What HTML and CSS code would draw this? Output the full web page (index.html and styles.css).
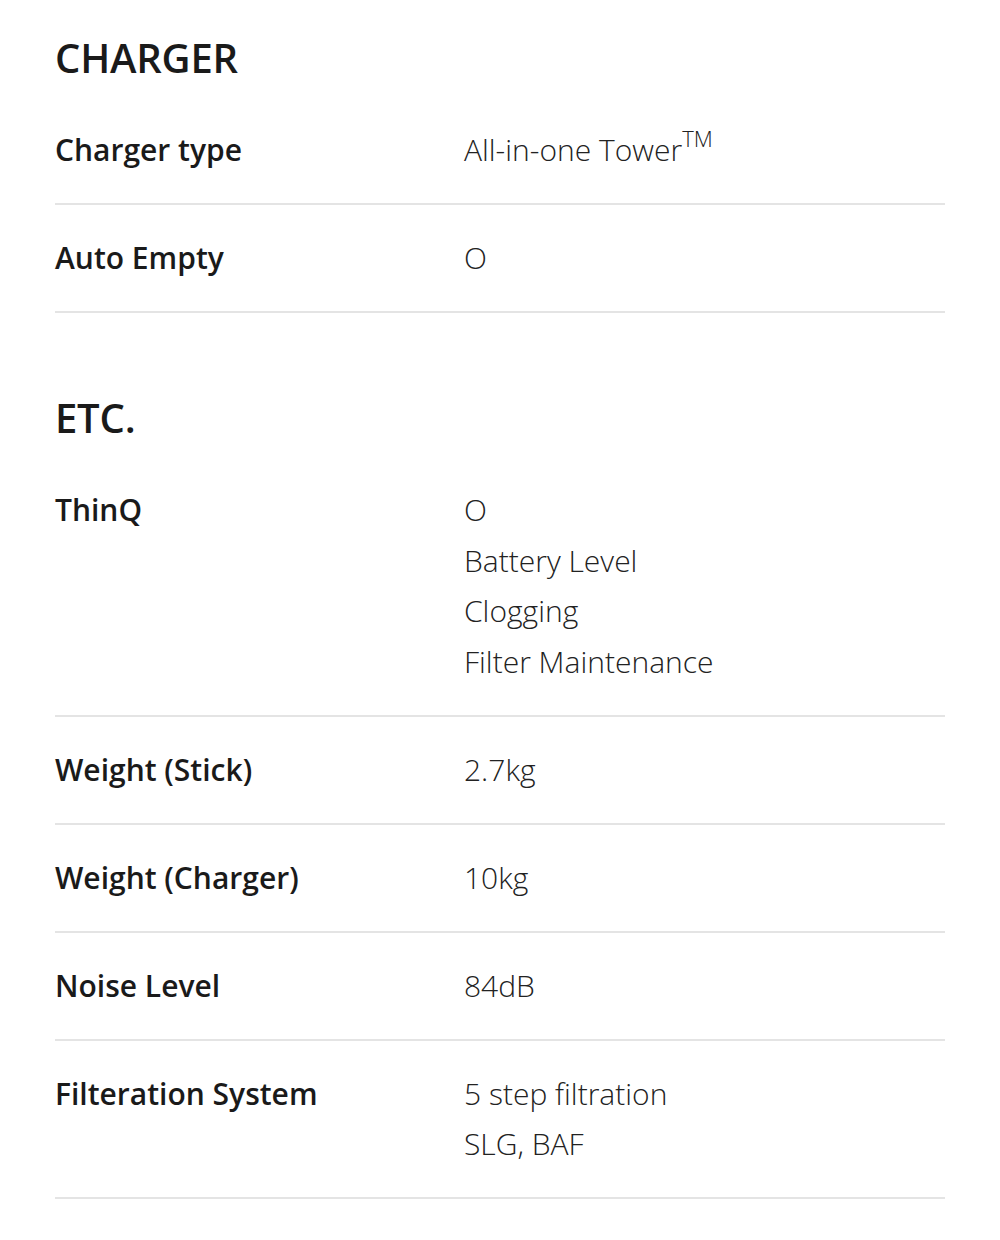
FILE: index.html
```html
<!DOCTYPE html>
<html lang="en">
<head>
<meta charset="utf-8">
<title>Specs</title>
<link rel="stylesheet" href="styles.css">
</head>
<body>
<main class="specs">
  <section class="group">
    <h2 class="group-title">CHARGER</h2>
    <dl class="rows">
      <div class="row"><dt class="label">Charger type</dt><dd class="value">All-in-one Tower<sup class="tm">TM</sup></dd></div>
      <div class="row"><dt class="label">Auto Empty</dt><dd class="value">O</dd></div>
    </dl>
  </section>
  <section class="group group-next">
    <h2 class="group-title">ETC.</h2>
    <dl class="rows">
      <div class="row"><dt class="label">ThinQ</dt><dd class="value">O<br>Battery Level<br>Clogging<br>Filter Maintenance</dd></div>
      <div class="row"><dt class="label">Weight (Stick)</dt><dd class="value">2.7kg</dd></div>
      <div class="row"><dt class="label">Weight (Charger)</dt><dd class="value">10kg</dd></div>
      <div class="row"><dt class="label">Noise Level</dt><dd class="value">84dB</dd></div>
      <div class="row"><dt class="label">Filteration System</dt><dd class="value">5 step filtration<br>SLG, BAF</dd></div>
    </dl>
  </section>
</main>
</body>
</html>
```
FILE: styles.css
```css
html, body {
  margin: 0;
  padding: 0;
  background: #ffffff;
}
body {
  font-family: "Open Sans", "Noto Sans", "Liberation Sans", sans-serif;
  color: #1a1a1a;
}
.specs {
  padding: 33px 55px 0 55px;
}
.group-next {
  margin-top: 80px;
}
.group-title {
  margin: 0 0 14px 0;
  font-size: 40px;
  line-height: 50px;
  font-weight: 600;
  letter-spacing: -0.2px;
  color: #1a1a1a;
}
.rows {
  margin: 0;
}
.row {
  display: grid;
  grid-template-columns: 409px 1fr;
  padding: 28px 0 27.5px 0;
  border-bottom: 2px solid #e4e4e4;
}
.label {
  margin: 0;
  font-size: 30px;
  line-height: 50.5px;
  font-weight: 600;
  letter-spacing: 0;
  color: #1a1a1a;
}
.value {
  margin: 0;
  font-size: 30px;
  line-height: 50.5px;
  font-weight: 300;
  letter-spacing: 0;
  color: #222222;
}
.tm {
  font-size: 22px;
  line-height: 0;
  vertical-align: 0;
  position: relative;
  top: -14px;
}
```
